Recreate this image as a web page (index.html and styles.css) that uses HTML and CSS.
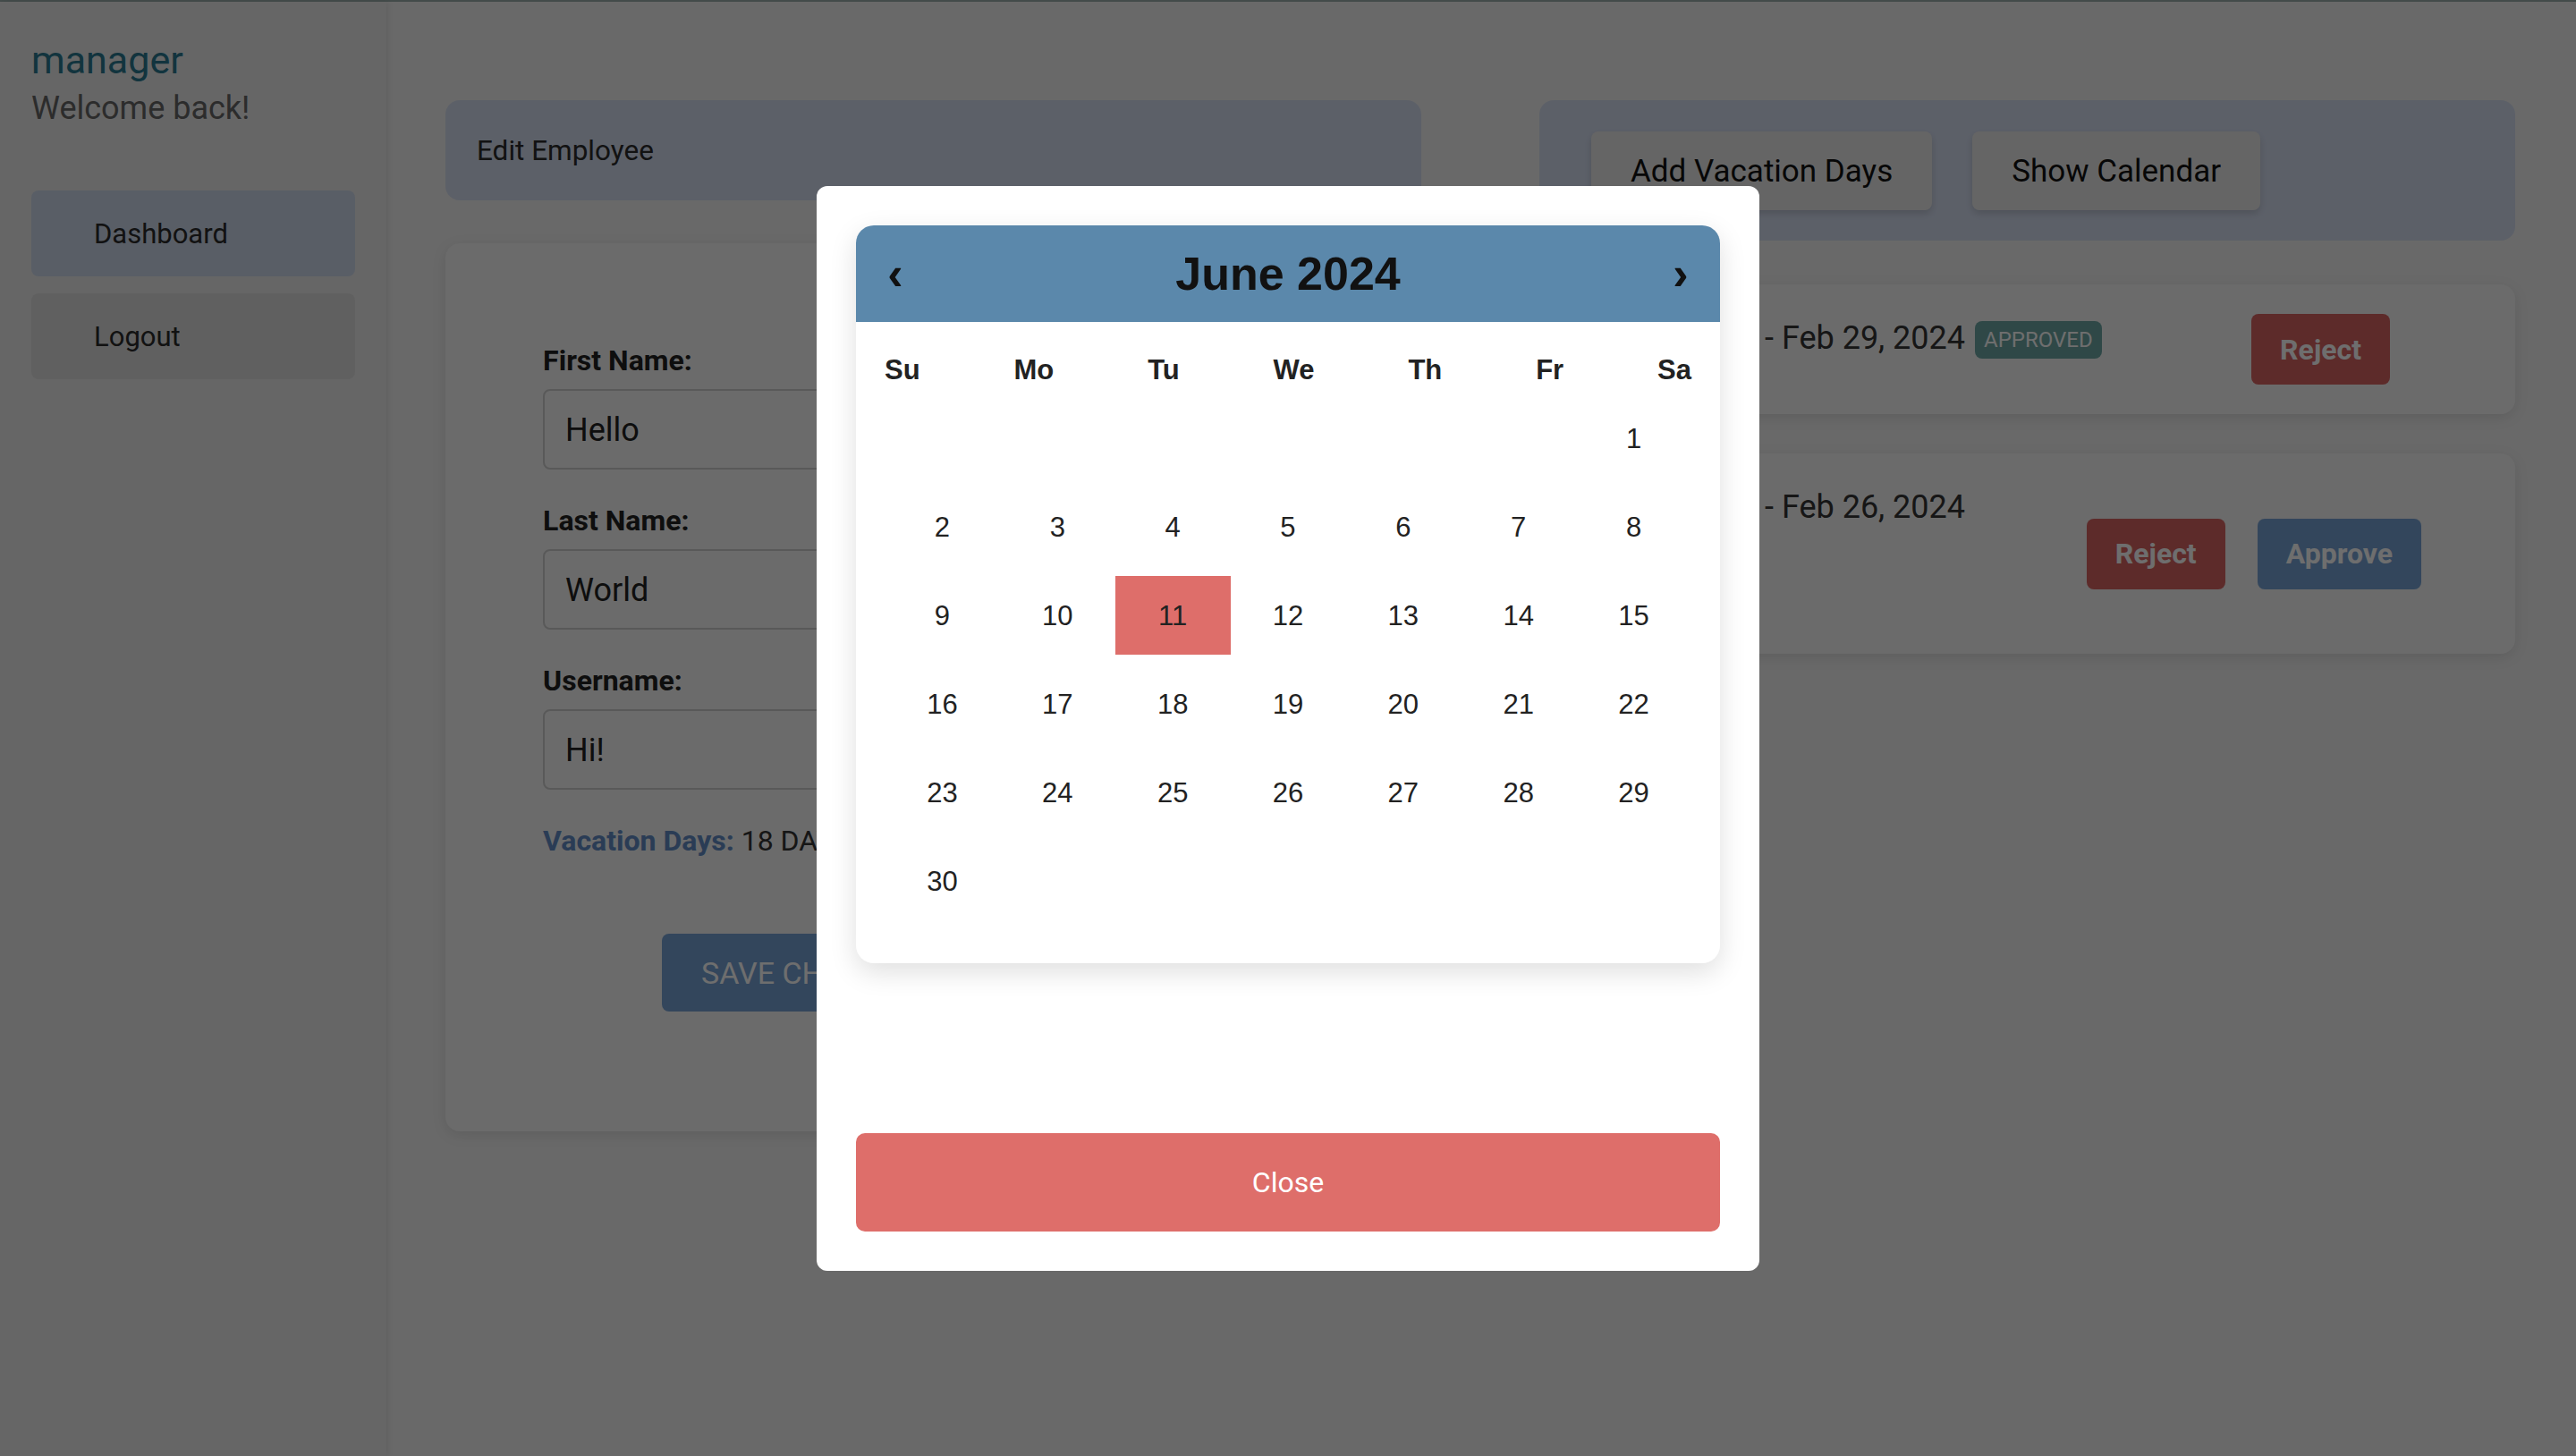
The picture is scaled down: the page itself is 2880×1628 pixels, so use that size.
FILE: index.html
```html
<!DOCTYPE html>
<html lang="en">
<head>
<meta charset="utf-8">
<title>Manager Dashboard</title>
<link rel="stylesheet" href="styles.css">
</head>
<body>
<div class="app">
  <aside class="sidebar">
    <h2 class="brand">manager</h2>
    <p class="welcome">Welcome back!</p>
    <nav class="nav">
      <div class="nav-item active">Dashboard</div>
      <div class="nav-item">Logout</div>
    </nav>
  </aside>
  <main class="main">
    <section class="col">
      <div class="panel-head">Edit Employee</div>
      <div class="form-card">
        <form class="form">
          <label class="label">First Name:</label>
          <input class="input" type="text" value="Hello">
          <label class="label">Last Name:</label>
          <input class="input" type="text" value="World">
          <label class="label">Username:</label>
          <input class="input" type="text" value="Hi!">
          <p class="vac"><span class="vac-label">Vacation Days:</span> 18 DAYS</p>
          <button class="save" type="button">Save Changes</button>
        </form>
      </div>
    </section>
    <section class="col">
      <div class="actions-card">
        <button class="tool-btn" type="button">Add Vacation Days</button>
        <button class="tool-btn" type="button">Show Calendar</button>
      </div>
      <div class="requests">
        <div class="req req-one">
          <div class="req-text">- Feb 29, 2024 <span class="badge">Approved</span></div>
          <div class="req-actions">
            <button class="btn btn-reject" type="button">Reject</button>
          </div>
        </div>
        <div class="req req-two">
          <div class="req-text">- Feb 26, 2024</div>
          <div class="req-actions">
            <button class="btn btn-reject" type="button">Reject</button>
            <button class="btn btn-approve" type="button">Approve</button>
          </div>
        </div>
      </div>
    </section>
  </main>
</div>

<div class="overlay">
  <div class="modal">
    <div class="calendar">
      <div class="cal-head">
        <span class="cal-arrow">&lsaquo;</span>
        <span class="cal-title">June 2024</span>
        <span class="cal-arrow">&rsaquo;</span>
      </div>
      <div class="cal-body">
        <div class="weekdays">
          <span>Su</span><span>Mo</span><span>Tu</span><span>We</span><span>Th</span><span>Fr</span><span>Sa</span>
        </div>
        <div class="days">
          <span class="day"></span><span class="day"></span><span class="day"></span><span class="day"></span><span class="day"></span><span class="day"></span><span class="day">1</span>
          <span class="day">2</span><span class="day">3</span><span class="day">4</span><span class="day">5</span><span class="day">6</span><span class="day">7</span><span class="day">8</span>
          <span class="day">9</span><span class="day">10</span><span class="day sel">11</span><span class="day">12</span><span class="day">13</span><span class="day">14</span><span class="day">15</span>
          <span class="day">16</span><span class="day">17</span><span class="day">18</span><span class="day">19</span><span class="day">20</span><span class="day">21</span><span class="day">22</span>
          <span class="day">23</span><span class="day">24</span><span class="day">25</span><span class="day">26</span><span class="day">27</span><span class="day">28</span><span class="day">29</span>
          <span class="day">30</span>
        </div>
      </div>
    </div>
    <button class="close" type="button">Close</button>
  </div>
</div>
</body>
</html>
```

FILE: styles.css
```css
* { box-sizing: border-box; }

html, body {
  margin: 0;
  padding: 0;
  height: 100%;
  overflow: hidden;
}

body {
  font-family: Roboto, "Liberation Sans", Arial, sans-serif;
  color: #333;
}

.app {
  display: flex;
  height: 1628px;
  border-top: 2px solid #9caeac;
}

/* Sidebar */
.sidebar {
  width: 432px;
  flex: none;
  background: #ededed;
  box-shadow: 3px 0 5px rgba(0, 0, 0, 0.07);
  padding: 39px 35px 0 35px;
  position: relative;
  z-index: 1;
}

.brand {
  margin: 0;
  font-size: 43px;
  line-height: 52px;
  font-weight: 400;
  color: #2a7890;
}

.welcome {
  margin: 6px 0 0;
  font-size: 36px;
  line-height: 44px;
  color: #666;
}

.nav {
  margin-top: 70px;
  display: flex;
  flex-direction: column;
  gap: 19px;
}

.nav-item {
  height: 96px;
  width: 362px;
  border-radius: 8px;
  padding-left: 70px;
  display: flex;
  align-items: center;
  font-size: 31px;
  color: #2a2a2a;
  background: #dfdfdf;
}

.nav-item.active {
  background: #cfdbed;
}

/* Main */
.main {
  flex: 1;
  background: #f3f3f3;
  padding: 110px 68px 0 66px;
  display: grid;
  grid-template-columns: 1fr 1fr;
  column-gap: 132px;
  align-items: start;
}

.col {
  display: flex;
  flex-direction: column;
}

.panel-head {
  height: 112px;
  border-radius: 16px;
  background: #d6dff2;
  padding-left: 35px;
  display: flex;
  align-items: center;
  font-size: 31.5px;
  color: #2a2a2a;
}

.form-card {
  margin-top: 48px;
  height: 993px;
  background: #f7f7f7;
  border-radius: 16px;
  box-shadow: 0 4px 16px rgba(0, 0, 0, 0.1);
  padding-top: 113px;
}

.form {
  width: 80%;
  margin: 0 auto;
}

.label {
  display: block;
  font-weight: 700;
  font-size: 32px;
  line-height: 37px;
  margin-bottom: 13px;
  color: #222;
}

.input {
  display: block;
  width: 100%;
  height: 90px;
  border: 2px solid #cfcfcf;
  border-radius: 8px;
  padding: 2px 23px 0;
  font-family: Roboto, sans-serif;
  font-size: 36px;
  color: #222;
  background: #f7f7f7;
  margin: 0 0 39px;
}

.vac {
  margin: 0;
  font-size: 32px;
  line-height: 37px;
  color: #333;
}

.vac-label {
  font-weight: 700;
  color: #628cc6;
}

.save {
  display: block;
  margin-top: 85px;
  margin-left: 133px;
  height: 87px;
  padding: 0 44px;
  background: #77a3d6;
  color: #fff;
  border: 0;
  border-radius: 8px;
  font-family: Roboto, sans-serif;
  font-size: 34px;
  text-transform: uppercase;
}

/* Right column */
.actions-card {
  height: 157px;
  border-radius: 16px;
  background: #d6dff2;
  padding: 35px 58px;
  display: flex;
  gap: 45px;
}

.tool-btn {
  height: 88px;
  padding: 0 44px;
  border: 0;
  border-radius: 8px;
  background: #ebebeb;
  box-shadow: 0 4px 8px rgba(0, 0, 0, 0.15);
  font-family: Roboto, sans-serif;
  font-size: 35px;
  color: #111;
}

.requests {
  margin-top: 49px;
  display: flex;
  flex-direction: column;
  gap: 44px;
}

.req {
  background: #f7f7f7;
  border-radius: 16px;
  box-shadow: 0 4px 16px rgba(0, 0, 0, 0.1);
  padding: 33px 140px 33px 252px;
  display: flex;
  justify-content: space-between;
}

.req-two {
  height: 224px;
  padding-right: 105px;
}

.req-text {
  font-size: 36px;
  line-height: 54px;
  color: #333;
}

.badge {
  display: inline-block;
  vertical-align: middle;
  height: 42px;
  line-height: 42px;
  padding: 0 10px;
  margin-left: 2px;
  border-radius: 8px;
  background: #6da7a5;
  color: #fff;
  font-size: 24px;
  text-transform: uppercase;
}

.req-actions {
  align-self: center;
  display: flex;
  gap: 36px;
}

.btn {
  height: 79px;
  padding: 0 32px;
  border: 0;
  border-radius: 8px;
  color: #fff;
  font-family: Roboto, sans-serif;
  font-weight: 700;
  font-size: 32px;
}

.btn-reject { background: #d86462; }
.btn-approve { background: #77a3d6; }

/* Modal */
.overlay {
  position: fixed;
  inset: 0;
  background: rgba(0, 0, 0, 0.57);
  display: flex;
  align-items: center;
  justify-content: center;
  z-index: 10;
}

.modal {
  width: 1054px;
  padding: 44px;
  background: #fff;
  border-radius: 12px;
}

.calendar {
  border-radius: 20px;
  background: #fff;
  box-shadow: 0 10px 30px rgba(0, 0, 0, 0.13);
  font-family: "Liberation Sans", Arial, sans-serif;
}

.cal-head {
  height: 108px;
  background: #5b88ab;
  border-radius: 20px 20px 0 0;
  display: flex;
  align-items: center;
  justify-content: space-between;
  padding: 0 34px;
}

.cal-title,
.cal-arrow {
  font-size: 52px;
  font-weight: 700;
  color: #111;
}

.cal-arrow {
  width: 20px;
  text-align: center;
}

.cal-body {
  padding: 36px 32px 48px;
}

.weekdays {
  display: flex;
  justify-content: space-between;
  font-weight: 700;
  font-size: 31px;
  line-height: 36px;
  color: #222;
}

.days {
  margin-top: 14px;
  display: grid;
  grid-template-columns: repeat(7, 1fr);
  grid-auto-rows: 88px;
  row-gap: 11px;
}

.day {
  display: flex;
  align-items: center;
  justify-content: center;
  padding-top: 2px;
  font-size: 31px;
  color: #222;
}

.day.sel {
  background: #de6e6a;
}

.close {
  display: block;
  margin-top: 190px;
  width: 100%;
  height: 110px;
  border: 0;
  border-radius: 10px;
  background: #de6e6a;
  color: #fff;
  font-family: Roboto, sans-serif;
  font-size: 32px;
}
```
